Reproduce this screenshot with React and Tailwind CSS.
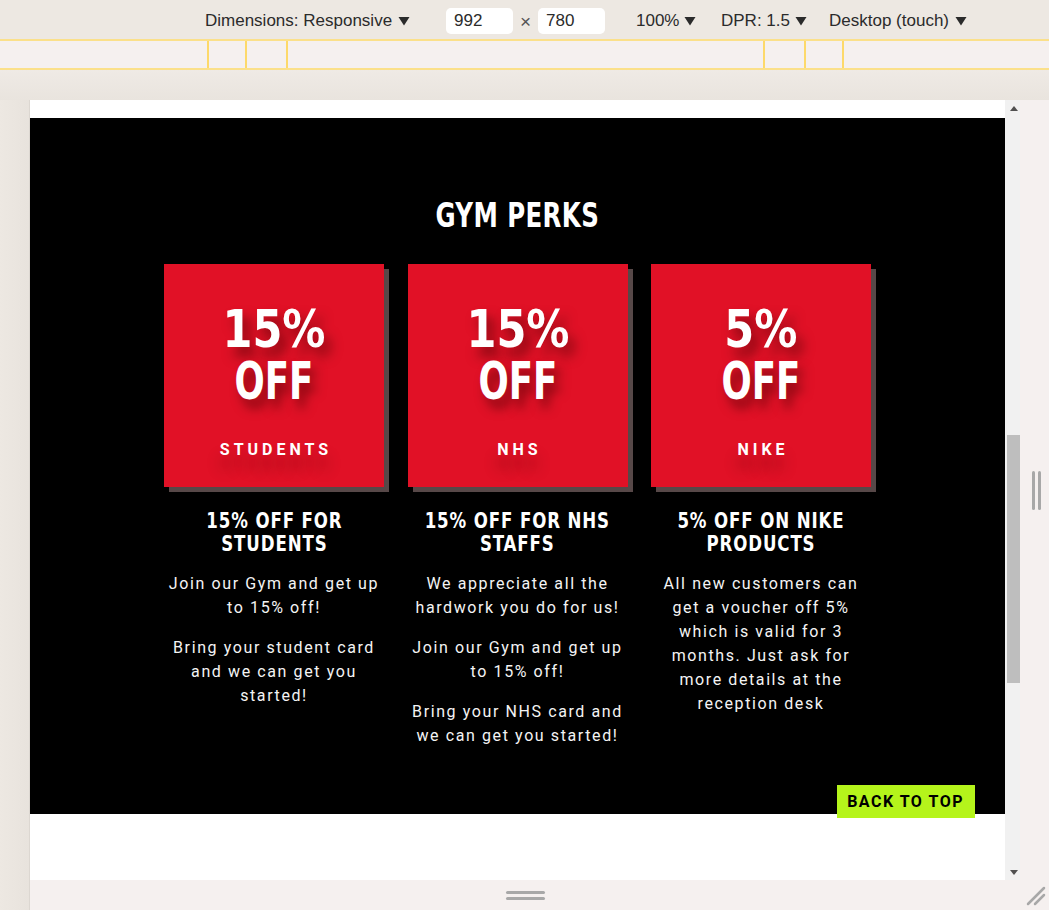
import React from "react";

const cond = "[font-family:'Liberation_Sans_Narrow','DejaVu_Sans_Condensed',sans-serif]";
const body = "[font-family:Roboto,'Liberation_Sans',sans-serif]";
const ui = "[font-family:'Liberation_Sans',Arial,sans-serif]";

function Caret() {
  return (
    <svg width="12" height="10" viewBox="0 0 12 10" className="inline-block">
      <path d="M0.5 1 L11.5 1 L6 9.5 Z" fill="#2b2b2b" />
    </svg>
  );
}

const perks = [
  {
    pct: "15%",
    label: "STUDENTS",
    title: ["15% OFF FOR", "STUDENTS"],
    paras: [
      ["Join our Gym and get up", "to 15% off!"],
      ["Bring your student card", "and we can get you", "started!"],
    ],
  },
  {
    pct: "15%",
    label: "NHS",
    title: ["15% OFF FOR NHS", "STAFFS"],
    paras: [
      ["We appreciate all the", "hardwork you do for us!"],
      ["Join our Gym and get up", "to 15% off!"],
      ["Bring your NHS card and", "we can get you started!"],
    ],
  },
  {
    pct: "5%",
    label: "NIKE",
    title: ["5% OFF ON NIKE", "PRODUCTS"],
    paras: [
      [
        "All new customers can",
        "get a voucher off 5%",
        "which is valid for 3",
        "months. Just ask for",
        "more details at the",
        "reception desk",
      ],
    ],
  },
];

function Perk({ p }) {
  return (
    <div className="flex flex-col items-center">
      <div className="w-full h-[223px] bg-[#e11126] shadow-[5px_5px_0_#574848] flex flex-col items-center pt-[39px]">
        <div
          className={`${cond} font-bold text-white text-[52px] leading-[52px] text-center [text-shadow:7px_9px_12px_rgba(60,0,0,0.55)]`}
        >
          <div className="scale-x-[0.92]">{p.pct}</div>
          <div className="scale-x-[0.76]">OFF</div>
        </div>
        <div
          className={`${body} mt-[33px] font-bold text-white text-[16px] leading-[20px] tracking-[4px] pl-[4px] [text-shadow:0_14px_14px_rgba(80,0,0,0.45)]`}
        >
          {p.label}
        </div>
      </div>
      <div
        className={`${cond} mt-[23px] font-bold text-white text-[21px] leading-[23px] tracking-[1px] text-center scale-x-[0.88]`}
      >
        {p.title.map((t) => (
          <div key={t} className="whitespace-nowrap">{t}</div>
        ))}
      </div>
      {p.paras.map((para, i) => (
        <div
          key={i}
          className={`${body} mt-[16px] first-of-type:mt-[17px] text-[#f4f4f4] text-[16px] leading-[24px] tracking-[1.6px] text-center`}
        >
          {para.map((l) => (
            <div key={l} className="whitespace-nowrap">{l}</div>
          ))}
        </div>
      ))}
    </div>
  );
}

export default function App() {
  return (
    <div className={`w-[1049px] h-[910px] bg-[#ede8e2] flex flex-col overflow-hidden ${ui}`}>
      {/* toolbar */}
      <div className="h-[39px] flex items-center pl-[205px] pt-[2px] text-[17px] text-[#2b2b2b]">
        <div className="w-[241px] flex items-center gap-[6px]">
          <span>Dimensions: Responsive</span>
          <Caret />
        </div>
        <div className="w-[67px] h-[26px] bg-white rounded-[5px] flex items-center pl-[8px]">992</div>
        <div className="w-[25px] text-center text-[#555] text-[19px] pt-[3px]">×</div>
        <div className="w-[67px] h-[26px] bg-white rounded-[5px] flex items-center pl-[8px]">780</div>
        <div className="ml-[31px] w-[85px] flex items-center gap-[5px]">
          <span>100%</span>
          <Caret />
        </div>
        <div className="w-[108px] flex items-center gap-[5px]">
          <span>DPR: 1.5</span>
          <Caret />
        </div>
        <div className="flex items-center gap-[6px]">
          <span>Desktop (touch)</span>
          <Caret />
        </div>
      </div>
      {/* ruler */}
      <div className="relative h-[31px] bg-[#f5f0ef] border-y-2 border-[#fbe08a]">
        <div className="absolute top-0 bottom-0 left-[207px] w-[2px] bg-[#fdd96a]" />
        <div className="absolute top-0 bottom-0 left-[245px] w-[2px] bg-[#fdd96a]" />
        <div className="absolute top-0 bottom-0 left-[286px] w-[2px] bg-[#fdd96a]" />
        <div className="absolute top-0 bottom-0 left-[763px] w-[2px] bg-[#fdd96a]" />
        <div className="absolute top-0 bottom-0 left-[804px] w-[2px] bg-[#fdd96a]" />
        <div className="absolute top-0 bottom-0 left-[842px] w-[2px] bg-[#fdd96a]" />
      </div>
      <div className="h-[30px] bg-gradient-to-b from-[#efeae5] to-[#e9e4de]" />
      {/* main row */}
      <div className="flex flex-1">
        <div className="w-[30px] bg-gradient-to-r from-[#ede8e2] to-[#e8e3dd] border-r border-[#dcd7d1]" />
        <div className="flex flex-col w-[1019px]">
          <div className="flex h-[780px]">
            {/* viewport */}
            <div className="relative w-[975px] h-[780px] bg-white overflow-hidden">
              <div className="h-[18px]" />
              <section className="bg-black h-[696px] flex flex-col items-center pt-[77px]">
                <h2
                  className={`${cond} font-bold text-white text-[34px] leading-[40px] tracking-[0.5px] scale-x-[0.8]`}
                >
                  GYM PERKS
                </h2>
                <div className="mt-[29px] grid grid-cols-3 gap-x-[23.5px] w-[707px]">
                  {perks.map((p) => (
                    <Perk key={p.label} p={p} />
                  ))}
                </div>
              </section>
              <a
                href="#"
                className={`${body} absolute right-[30px] bottom-[62px] h-[33px] pl-[10px] pr-[11px] flex items-center bg-[#b5f41b] text-black font-bold text-[16px] tracking-[1.5px]`}
              >
                BACK TO TOP
              </a>
            </div>
            {/* scrollbar */}
            <div className="w-[15px] bg-[#f1f1f1] flex flex-col items-center">
              <div className="h-[16px] flex items-center justify-center pl-[2px]">
                <svg width="8" height="5" viewBox="0 0 8 5">
                  <path d="M0 5 L4 0 L8 5 Z" fill="#505050" />
                </svg>
              </div>
              <div className="h-[319px]" />
              <div className="w-[13px] ml-[2px] h-[248px] bg-[#bebebe]" />
              <div className="flex-1" />
              <div className="h-[16px] flex items-center justify-center pl-[2px]">
                <svg width="8" height="5" viewBox="0 0 8 5">
                  <path d="M0 0 L8 0 L4 5 Z" fill="#505050" />
                </svg>
              </div>
            </div>
            {/* right handle panel */}
            <div className="w-[29px] bg-[#f5f0ef] flex items-center pl-[12px] gap-[3px]">
              <div className="w-[3px] h-[39px] rounded-full bg-[#a8a8a8]" />
              <div className="w-[3px] h-[39px] rounded-full bg-[#a8a8a8]" />
            </div>
          </div>
          {/* bottom bar */}
          <div className="h-[30px] bg-[#f5f0ef] flex">
            <div className="w-[990px] flex flex-col items-center justify-center gap-[3px]">
              <div className="w-[39px] h-[3px] rounded-full bg-[#a8a8a8]" />
              <div className="w-[39px] h-[3px] rounded-full bg-[#a8a8a8]" />
            </div>
            <div className="w-[29px] flex items-end justify-end pr-[3px] pb-[4px]">
              <svg width="20" height="20" viewBox="0 0 20 20">
                <path d="M18 2 L2 18 M18 9 L9 18" stroke="#a8a8a8" strokeWidth="2.5" strokeLinecap="round" />
              </svg>
            </div>
          </div>
        </div>
      </div>
    </div>
  );
}
